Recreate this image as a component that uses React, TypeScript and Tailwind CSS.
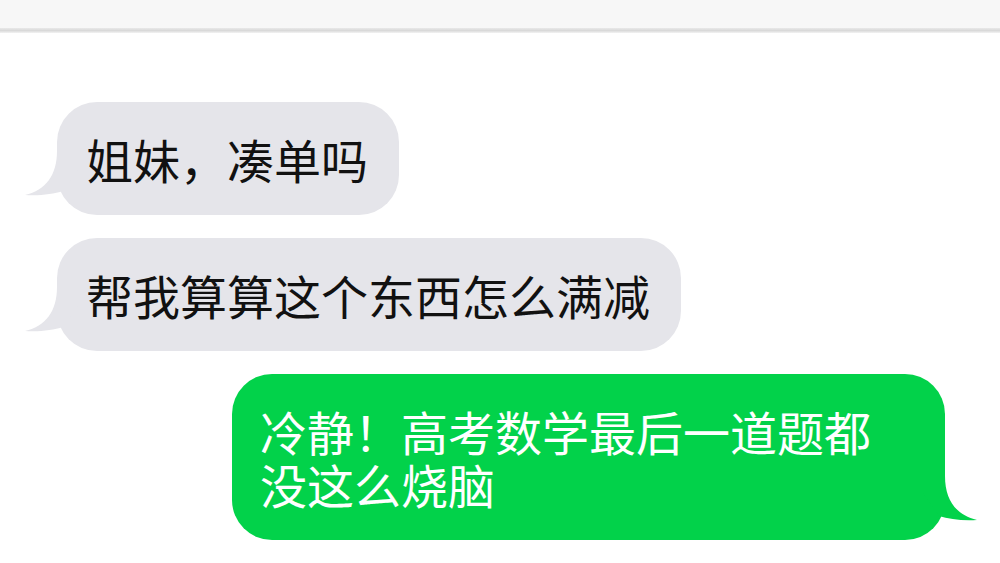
import React from "react";

function Tail({ color, side }: { color: string; side: "left" | "right" }) {
  const pos =
    side === "left"
      ? "absolute -left-[36px] bottom-[15px]"
      : "absolute -right-[36px] bottom-[15px] -scale-x-100";
  return (
    <svg className={pos} width="60" height="52" viewBox="0 0 60 52" aria-hidden="true">
      <path d="M36 3 C36 27, 25 42, 4 47 C19 48, 32 46, 42 43 L58 20 L58 3 Z" fill={color} />
    </svg>
  );
}

function Received({ text }: { text: string }) {
  return (
    <div className="relative self-start rounded-[40px] bg-[#e5e5ea] pl-[29px] pr-[31px] py-[30px] text-[#111] text-[47px] leading-[53px]">
      <Tail color="#e5e5ea" side="left" />
      <span className="relative">{text}</span>
    </div>
  );
}

function Sent({ text }: { text: string }) {
  return (
    <div className="relative self-end w-[713px] rounded-[40px] bg-[#02d24a] pl-[28px] pr-[30px] py-[30px] text-white text-[47px] leading-[53px]">
      <Tail color="#02d24a" side="right" />
      <span className="relative">{text}</span>
    </div>
  );
}

export default function App() {
  return (
    <div className="w-[1000px] h-[563px] overflow-hidden bg-white font-['Noto_Sans_CJK_SC','Microsoft_YaHei',sans-serif]">
      <div className="h-[28px] bg-[#f7f7f7]" />
      <div className="h-[5px] bg-linear-to-b from-[#e9e9e9] via-[#d9d9d9] to-[#f3f3f3]" />
      <div className="flex flex-col gap-[23px] pt-[69px] pl-[57px] pr-[55px]">
        <Received text="姐妹，凑单吗" />
        <Received text="帮我算算这个东西怎么满减" />
        <Sent text="冷静！高考数学最后一道题都没这么烧脑" />
      </div>
    </div>
  );
}
